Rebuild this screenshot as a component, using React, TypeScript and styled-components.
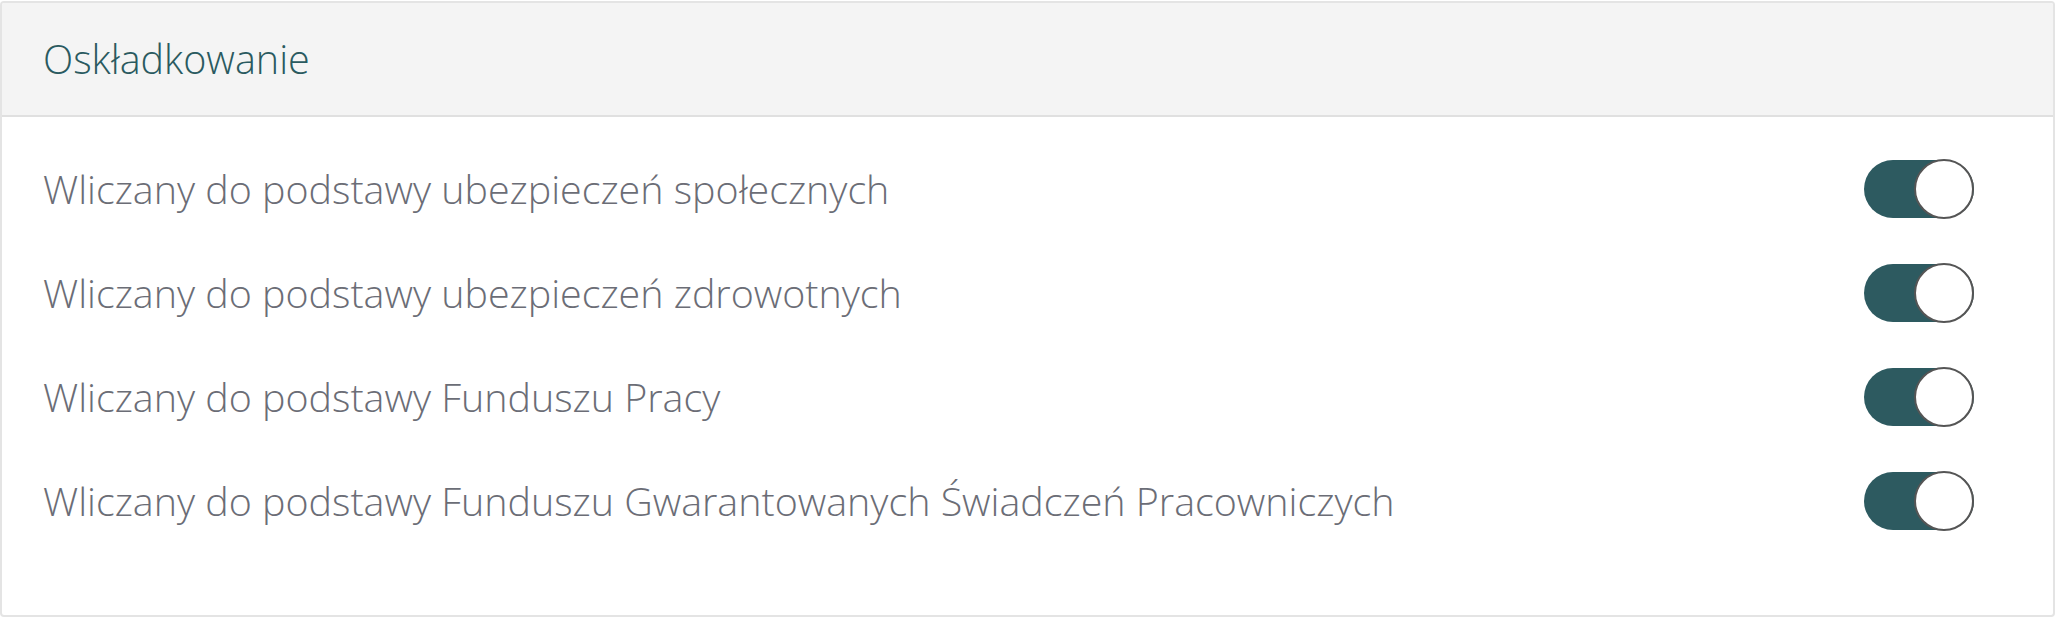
import React from "react";
import styled, { createGlobalStyle } from "styled-components";

const Global = createGlobalStyle`
  html, body { margin: 0; padding: 0; background: #ffffff; }
  body { font-family: "Open Sans", "Noto Sans", sans-serif; }
  * { box-sizing: border-box; }
`;

const Card = styled.section`
  margin: 1px 1px 0 0;
  height: 616px;
  border: 2px solid #e4e4e4;
  border-radius: 4px;
  background: #fff;
  display: flex;
  flex-direction: column;
  overflow: hidden;
`;

const Header = styled.header`
  height: 114px;
  flex: none;
  background: #f4f4f4;
  border-bottom: 2px solid #e0e0e0;
  display: flex;
  align-items: center;
  padding: 0 41px;
`;

const Title = styled.h2`
  margin: 0;
  font-weight: 300;
  font-size: 39.5px;
  color: #2a5a60;
`;

const Body = styled.div`
  display: flex;
  flex-direction: column;
  padding: 20px 79px 0 41px;
`;

const Row = styled.div`
  height: 104px;
  display: flex;
  align-items: center;
  justify-content: space-between;
`;

const Label = styled.span`
  font-size: 39.4px;
  font-weight: 300;
  color: #6b6d76;
`;

const Track = styled.button<{ $on: boolean }>`
  position: relative;
  width: 110px;
  height: 58px;
  border: none;
  padding: 0;
  border-radius: 29px;
  background: ${(p) => (p.$on ? "#2d5a60" : "#cfd3d6")};
  cursor: pointer;
  flex: none;
`;

const Knob = styled.span<{ $on: boolean }>`
  position: absolute;
  top: -1px;
  left: ${(p) => (p.$on ? "50px" : "0px")};
  width: 60px;
  height: 60px;
  border-radius: 50%;
  background: #fff;
  border: 2.5px solid #555;
`;

const items = [
  "Wliczany do podstawy ubezpieczeń społecznych",
  "Wliczany do podstawy ubezpieczeń zdrowotnych",
  "Wliczany do podstawy Funduszu Pracy",
  "Wliczany do podstawy Funduszu Gwarantowanych Świadczeń Pracowniczych",
];

export default function App() {
  return (
    <>
      <Global />
      <Card>
        <Header>
          <Title>Oskładkowanie</Title>
        </Header>
        <Body>
          {items.map((t) => (
            <Row key={t}>
              <Label>{t}</Label>
              <Track $on={true} aria-label={t}>
                <Knob $on={true} />
              </Track>
            </Row>
          ))}
        </Body>
      </Card>
    </>
  );
}
